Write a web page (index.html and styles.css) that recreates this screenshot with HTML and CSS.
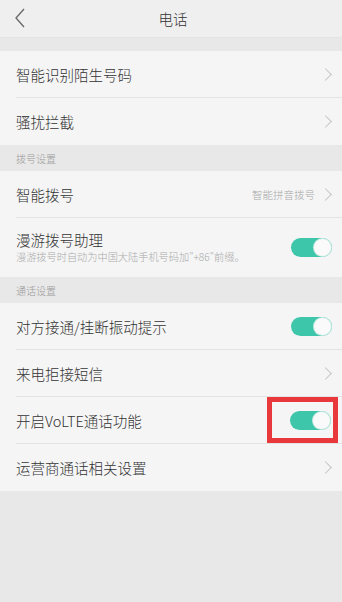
FILE: index.html
```html
<!DOCTYPE html>
<html lang="zh-CN">
<head>
    <meta charset="UTF-8">
    <meta name="viewport" content="width=device-width, initial-scale=1.0">
    <title>电话</title>
    <link rel="stylesheet" href="styles.css">
</head>
<body>
    <div class="header">
        <span class="back">
            <svg width="12" height="20" viewBox="0 0 12 20"><path d="M10 1 L2 10 L10 19" fill="none" stroke="#666" stroke-width="1.3"/></svg>
        </span>
        <span class="title">电话</span>
    </div>
    <div class="gap"></div>

    <div class="group">
        <div class="row">
            <span class="label">智能识别陌生号码</span>
            <span class="arrow"></span>
        </div>
        <div class="row last">
            <span class="label">骚扰拦截</span>
            <span class="arrow"></span>
        </div>
    </div>

    <div class="section">拨号设置</div>
    <div class="group">
        <div class="row">
            <span class="label">智能拨号</span>
            <span class="value">智能拼音拨号</span>
            <span class="arrow"></span>
        </div>
        <div class="row tall last">
            <div class="texts">
                <span class="label">漫游拨号助理</span>
                <span class="sub">漫游拨号时自动为中国大陆手机号码加"+86"前缀。</span>
            </div>
            <span class="switch"></span>
        </div>
    </div>

    <div class="section">通话设置</div>
    <div class="group">
        <div class="row">
            <span class="label">对方接通/挂断振动提示</span>
            <span class="switch"></span>
        </div>
        <div class="row">
            <span class="label">来电拒接短信</span>
            <span class="arrow"></span>
        </div>
        <div class="row">
            <span class="label">开启VoLTE通话功能</span>
            <span class="mark"><span class="switch"></span></span>
        </div>
        <div class="row last">
            <span class="label">运营商通话相关设置</span>
            <span class="arrow"></span>
        </div>
    </div>
</body>
</html>
```

FILE: styles.css
```css
body {
    margin: 0;
    background: #e8e8e8;
    font-family: "Noto Sans CJK SC", "Noto Sans", sans-serif;
    font-weight: 300;
    color: #333;
}

.header {
    height: 37px;
    background: #efefef;
    display: flex;
    align-items: center;
    justify-content: center;
    position: relative;
    border-bottom: 1px solid #e4e4e4;
}

.back {
    position: absolute;
    left: 14px;
    top: 8px;
}

.title {
    font-size: 14.5px;
    margin-left: 4px;
}

.gap {
    height: 13px;
}

.group {
    background: #f5f5f5;
}

.row {
    height: 46px;
    margin-left: 16px;
    padding-right: 14px;
    display: flex;
    align-items: center;
    border-bottom: 1px solid #e3e3e3;
}

.row.last {
    border-bottom: none;
    height: 47px;
}

.row.tall {
    height: 59px;
}

.label {
    font-size: 14.5px;
    flex: 1;
}

.texts {
    flex: 1;
    display: flex;
    flex-direction: column;
    margin-top: -2px;
}

.texts .label {
    flex: none;
    line-height: 20px;
}

.sub {
    font-size: 10.2px;
    color: #aaa;
    line-height: 14px;
}

.value {
    font-size: 10.5px;
    color: #a8a8a8;
    margin-right: 6px;
}

.arrow {
    width: 8px;
    height: 8px;
    border-top: 1px solid #c4c4c4;
    border-right: 1px solid #c4c4c4;
    transform: rotate(45deg);
    margin-right: -2px;
}

.section {
    height: 26px;
    display: flex;
    align-items: center;
    padding-left: 16px;
    font-size: 10px;
    color: #999;
}

.switch {
    width: 41px;
    height: 19px;
    border-radius: 10px;
    background: #3ec6ab;
    position: relative;
    margin-right: -4px;
}

.switch::after {
    content: "";
    position: absolute;
    right: 1px;
    top: 1px;
    width: 17px;
    height: 17px;
    border-radius: 50%;
    background: #fafafa;
    box-shadow: 0 0 0 1px #c8e9e1;
}

.mark {
    border: 5px solid #e8383b;
    padding: 9px 2px 8px 18px;
    margin-right: -10px;
    display: flex;
}

.mark .switch {
    margin-right: 0;
}
```
